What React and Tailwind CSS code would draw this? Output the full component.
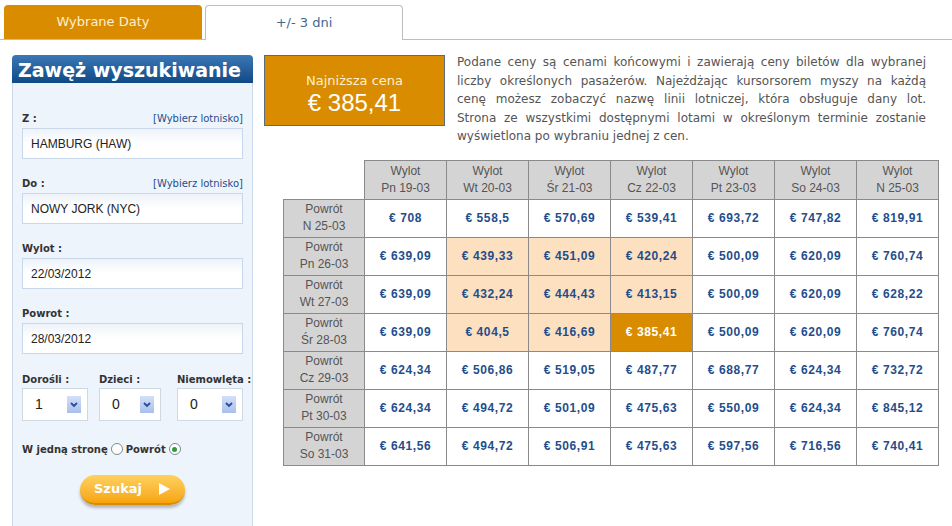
import React from "react";

const dejavu = "font-['DejaVu_Sans',sans-serif]";
const lib = "font-['Liberation_Sans',Arial,sans-serif]";

const days = [
  "Pn 19-03",
  "Wt 20-03",
  "Śr 21-03",
  "Cz 22-03",
  "Pt 23-03",
  "So 24-03",
  "N 25-03",
];

// hi = highlighted (peach), sel = selected (lowest)
const rows = [
  { day: "N 25-03", prices: ["708", "558,5", "570,69", "539,41", "693,72", "747,82", "819,91"], hi: [] },
  { day: "Pn 26-03", prices: ["639,09", "439,33", "451,09", "420,24", "500,09", "620,09", "760,74"], hi: [1, 2, 3] },
  { day: "Wt 27-03", prices: ["639,09", "432,24", "444,43", "413,15", "500,09", "620,09", "628,22"], hi: [1, 2, 3] },
  { day: "Śr 28-03", prices: ["639,09", "404,5", "416,69", "385,41", "500,09", "620,09", "760,74"], hi: [1, 2], sel: 3 },
  { day: "Cz 29-03", prices: ["624,34", "506,86", "519,05", "487,77", "688,77", "624,34", "732,72"], hi: [] },
  { day: "Pt 30-03", prices: ["624,34", "494,72", "501,09", "475,63", "550,09", "624,34", "845,12"], hi: [] },
  { day: "So 31-03", prices: ["641,56", "494,72", "506,91", "475,63", "597,56", "716,56", "740,41"], hi: [] },
];

function Field({ label, value, link }) {
  return (
    <div>
      <div className="flex h-[14px] items-center justify-between">
        <span className={`${dejavu} text-[10px] font-bold text-[#333]`}>{label}</span>
        {link ? (
          <span className={`${dejavu} text-[10px] text-[#1f4e8c]`}>[Wybierz lotnisko]</span>
        ) : null}
      </div>
      <div className="mt-[3px] flex h-[31px] items-center border border-[#c8d8ea] bg-gradient-to-b from-[#eef3f9] via-white to-white px-[8px]">
        <span className={`${lib} text-[12px] text-[#222]`}>{value}</span>
      </div>
    </div>
  );
}

function Dropdown({ value, width }) {
  return (
    <div
      className={`flex h-[33px] ${width} items-center justify-between border border-[#cfd9e4] bg-white pl-[12px] pr-[6px]`}
    >
      <span className={`${lib} text-[14px] text-[#222]`}>{value}</span>
      <span className="flex h-[17px] w-[14px] items-center justify-center bg-gradient-to-b from-[#d3e0f8] to-[#a8bfec]">
        <svg width="8" height="6" viewBox="0 0 8 6">
          <path d="M1 1 L4 4 L7 1" fill="none" stroke="#2a4a9a" strokeWidth="1.8" />
        </svg>
      </span>
    </div>
  );
}

function Radio({ checked }) {
  return (
    <span className="inline-flex h-[12px] w-[12px] items-center justify-center rounded-full border border-[#7d8a96] bg-white">
      {checked ? <span className="h-[5px] w-[5px] rounded-full bg-[#2f9a3a]" /> : null}
    </span>
  );
}

function Sidebar() {
  return (
    <div className="ml-[12px] w-[241px] shrink-0">
      <div
        className={`flex h-[28px] items-center rounded-t-[4px] bg-gradient-to-b from-[#3a78b6] to-[#0f4a86] pl-[6px] pt-[2px] ${dejavu} text-[19px] font-bold leading-none text-white`}
      >
        Zawęż wyszukiwanie
      </div>
      <div className="h-[470px] border border-t-0 border-[#c9d9ea] bg-[#eef4fb] px-[9px] pt-[28px]">
        <div className="flex flex-col gap-[17px]">
          <Field label="Z :" value="HAMBURG (HAW)" link />
          <Field label="Do :" value="NOWY JORK (NYC)" link />
          <Field label="Wylot :" value="22/03/2012" />
          <Field label="Powrot :" value="28/03/2012" />
        </div>
        <div className="mt-[18px] flex">
          <div className="w-[77px]">
            <div className={`h-[14px] ${dejavu} text-[10px] font-bold text-[#333]`}>Dorośli :</div>
            <div className="mt-[2px]">
              <Dropdown value="1" width="w-[66px]" />
            </div>
          </div>
          <div className="w-[78px]">
            <div className={`h-[14px] ${dejavu} text-[10px] font-bold text-[#333]`}>Dzieci :</div>
            <div className="mt-[2px]">
              <Dropdown value="0" width="w-[62px]" />
            </div>
          </div>
          <div className="w-[66px]">
            <div className={`h-[14px] whitespace-nowrap ${dejavu} text-[10px] font-bold text-[#333]`}>
              Niemowlęta :
            </div>
            <div className="mt-[2px]">
              <Dropdown value="0" width="w-[66px]" />
            </div>
          </div>
        </div>
        <div className={`mt-[21px] flex h-[14px] items-center gap-[3px] ${dejavu} text-[10px] font-bold text-[#333]`}>
          <span>W jedną stronę</span>
          <Radio />
          <span>Powrót</span>
          <Radio checked />
        </div>
        <div className="mt-[19px] flex justify-center">
          <button
            type="button"
            className={`flex h-[30px] w-[105px] items-center justify-center gap-[16px] rounded-full border-b-2 border-[#d88a00] bg-gradient-to-b from-[#ffd15c] to-[#f6a500] shadow-[0_3px_3px_rgba(0,0,0,0.25)] ${dejavu} text-[13px] font-bold text-white`}
          >
            <span>Szukaj</span>
            <svg width="13" height="14" viewBox="0 0 13 14">
              <path d="M1 1 L12 7 L1 13 Z" fill="white" />
            </svg>
          </button>
        </div>
      </div>
    </div>
  );
}

function PriceTable() {
  return (
    <table className="table-fixed border-collapse">
      <thead>
        <tr className="h-[39px]">
          <th className="w-[81px] border-0 p-0" />
          {days.map((d) => (
            <th
              key={d}
              className={`w-[82px] border border-[#8a8a8a] bg-[#d4d4d4] p-0 ${lib} text-[12px] font-normal leading-[17px] text-[#555]`}
            >
              Wylot
              <br />
              {d}
            </th>
          ))}
        </tr>
      </thead>
      <tbody>
        {rows.map((r) => (
          <tr key={r.day} className="h-[38px]">
            <th
              className={`border border-[#8a8a8a] bg-[#d4d4d4] p-0 ${lib} text-[12px] font-normal leading-[17px] text-[#555]`}
            >
              Powrót
              <br />
              {r.day}
            </th>
            {r.prices.map((p, i) => {
              const sel = r.sel === i;
              const hi = r.hi.includes(i);
              return (
                <td
                  key={i}
                  className={`border border-[#8a8a8a] p-0 text-center ${lib} text-[12px] font-bold tracking-[0.6px] ${
                    sel
                      ? "bg-[#d98c00] text-white"
                      : hi
                      ? "bg-[#fde0bf] text-[#1f4e8c]"
                      : "bg-white text-[#1f4e8c]"
                  }`}
                >
                  € {p}
                </td>
              );
            })}
          </tr>
        ))}
      </tbody>
    </table>
  );
}

export default function App() {
  const lines = [
    "Podane ceny są cenami końcowymi i zawierają ceny biletów dla wybranej",
    "liczby określonych pasażerów. Najeżdżając kursorsorem myszy na każdą",
    "cenę możesz zobaczyć nazwę linii lotniczej, która obsługuje dany lot.",
    "Strona ze wszystkimi dostępnymi lotami w określonym terminie zostanie",
  ];
  return (
    <div className="h-[526px] w-[952px] overflow-hidden bg-white">
      <div className="flex h-[40px] items-end gap-[3px] border-b border-[#bdbdbd] pl-[4px]">
        <div
          className={`flex h-[34px] w-[198px] items-center justify-center rounded-t-[4px] bg-[#d98c00] ${dejavu} text-[13px] text-[#fcefd2]`}
        >
          Wybrane Daty
        </div>
        <div
          className={`-mb-px flex h-[35px] w-[198px] items-center justify-center rounded-t-[4px] border border-b-0 border-[#bdbdbd] bg-white ${dejavu} text-[13px] text-[#3d6a8f]`}
        >
          +/- 3 dni
        </div>
      </div>

      <div className="mt-[15px] flex">
        <Sidebar />
        <div className="ml-[11px] flex-1">
          <div className="flex">
            <div className="flex h-[71px] w-[181px] shrink-0 flex-col items-center justify-center border border-[#5b6b7b] bg-[#d98c00] pt-[9px]">
              <div className={`${dejavu} text-[13px] leading-[16px] text-[#fdf0d0]`}>Najniższa cena</div>
              <div className={`${lib} text-[24px] leading-[28px] text-white`}>€ 385,41</div>
            </div>
            <div className={`ml-[12px] -mt-[2px] w-[469px] ${dejavu} text-[12px] leading-[18.5px] text-[#555]`}>
              {lines.map((l) => (
                <div key={l} className="text-justify [text-align-last:justify]">
                  {l}
                </div>
              ))}
              <div>wyświetlona po wybraniu jednej z cen.</div>
            </div>
          </div>
          <div className="ml-[19px] mt-[14px]">
            <PriceTable />
          </div>
        </div>
      </div>
    </div>
  );
}
